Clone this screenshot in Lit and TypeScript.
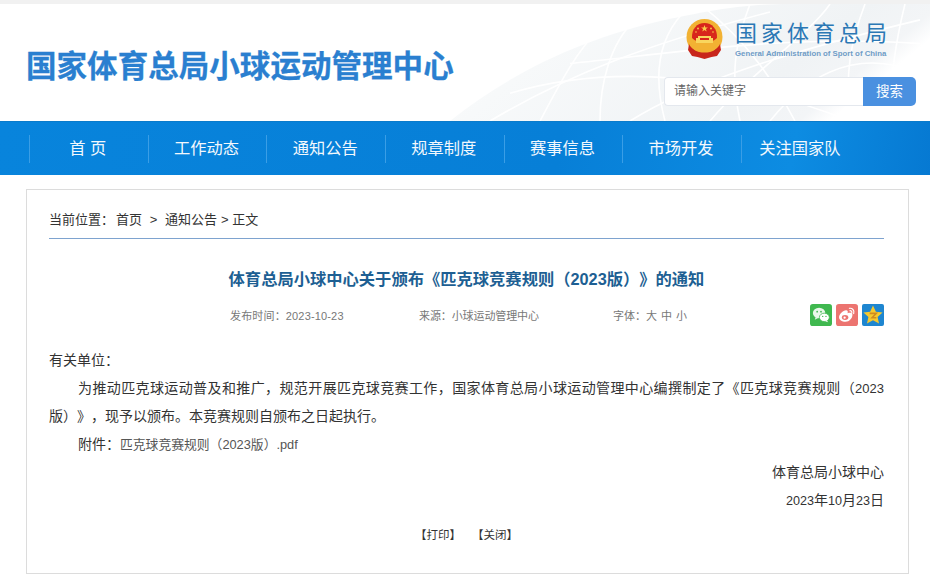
import { LitElement, html, css, svg } from "lit";
import { customElement } from "lit/decorators.js";

const NAV = ["首 页", "工作动态", "通知公告", "规章制度", "赛事信息", "市场开发", "关注国家队"];

const nest = svg`
  <defs>
    <linearGradient id="shade" x1="0" y1="0" x2="1" y2="0.3">
      <stop offset="0" stop-color="#fff"/>
      <stop offset=".3" stop-color="#f7f9fa"/>
      <stop offset=".8" stop-color="#f0f3f5"/>
      <stop offset=".94" stop-color="#f3f5f7"/>
      <stop offset="1" stop-color="#fff"/>
    </linearGradient>
  </defs>
  <path d="M0 118 C60 70 130 35 220 15 C270 4 300 0 340 0 L480 0 L480 118 Z" fill="url(#shade)"/>
  <g fill="none" stroke="#fff" stroke-width="1.6">
    <path d="M40 118 C120 70 200 40 320 8"/><path d="M90 118 C110 80 125 50 150 24"/>
    <path d="M150 118 C150 80 160 40 185 16"/><path d="M215 118 C205 80 205 40 232 10"/>
    <path d="M60 90 C160 60 280 70 400 118"/><path d="M290 118 C280 70 285 40 300 0"/>
    <path d="M345 118 C325 80 300 40 250 0"/><path d="M400 118 C395 70 400 40 415 0"/>
    <path d="M120 60 C220 50 340 30 470 40"/><path d="M180 118 C240 80 330 50 470 16"/>
    <path d="M320 118 C350 80 400 40 470 70"/><path d="M440 118 C440 80 445 40 455 0"/>
    <path d="M260 118 C300 70 360 30 380 0"/>
  </g>`;

@customElement("app-root")
export class AppRoot extends LitElement {
  static styles = css`
    :host { display: block; width: 930px; height: 575px; overflow: hidden; background: #fff;
      font-family: "Liberation Sans", "Noto Sans CJK SC", sans-serif; color: #333; text-spacing-trim: space-all; }
    .top { height: 4px; background: #f1f1f1; }
    .head { position: relative; height: 117px; display: flex; justify-content: space-between; background: #fff; overflow: hidden; }
    .nest { position: absolute; right: 0; top: 0; width: 480px; height: 117px; }
    .site { position: relative; margin: 42px 0 0 26px; font-size: 30.5px; line-height: 40px; font-weight: 700; color: #2a7fd0; letter-spacing: .05px; white-space: nowrap; -webkit-text-stroke: .3px #2a7fd0; }
    .side { position: relative; width: 252px; margin-right: 14px; display: flex; flex-direction: column; align-items: flex-end; }
    .brand { display: flex; align-items: flex-start; gap: 12px; height: 42px; margin: 15px 25px 0 0; }
    .emblem { width: 37px; height: 40px; }
    .names { display: flex; flex-direction: column; }
    .cn { font-size: 22px; line-height: 30px; letter-spacing: 4px; color: #2b78b5; white-space: nowrap; }
    .en { font-size: 7.8px; line-height: 10px; font-weight: 700; color: #6f9cc6; white-space: nowrap; }
    .search { display: flex; width: 252px; height: 29px; margin-top: 16px; }
    .field { flex: 1; box-sizing: border-box; border: 1px solid #e4e8ee; border-right: 0; border-radius: 4px 0 0 4px; background: #fff; padding-left: 9px; font-size: 12px; line-height: 27px; color: #666; }
    .btn { width: 53px; background: #4a90e0; border-radius: 0 5px 5px 0; color: #fff; font-size: 13.5px; line-height: 29px; text-align: center; }
    nav { height: 54px; box-sizing: border-box; padding: 13px 0 0 29px; display: flex; align-items: flex-start; border-top: 1px solid #0a7bcb;
      background: linear-gradient(100deg, #0884dc 0%, #077fd7 60%, #0d8ce2 85%, #0679d2 100%); }
    .item { box-sizing: border-box; width: 118.67px; height: 28px; padding-right: 2px; border-left: 1px solid #3a9ee6; color: #f2f8fd; font-size: 16.25px; line-height: 26px; text-align: center; white-space: nowrap; }
    main { box-sizing: border-box; margin: 14px 21px 0 26px; height: 385px; border: 1px solid #dcdcdc; padding: 0 24px 0 22px; }
    .crumb { height: 49px; box-sizing: border-box; padding-top: 21px; border-bottom: 1px solid #7ea3cf; font-size: 13px; line-height: 18px; color: #333; white-space: pre; word-spacing: .25px; }
    .crumb span { margin-left: 2px; }
    h1 { margin: 28px 0 0; font-size: 16.3px; line-height: 24px; font-weight: 700; color: #1d5f93; text-align: center; white-space: nowrap; }
    .meta { display: flex; align-items: center; height: 24px; margin-top: 12px; font-size: 11px; color: #777; white-space: nowrap; }
    .meta > span { flex: none; }
    .date { margin-left: 181px; width: 189px; letter-spacing: .16px; }
    .src { width: 194px; letter-spacing: -.1px; }
    .meta .size { flex: 1; word-spacing: 1px; }
    .share { display: flex; gap: 4px; }
    .share svg { width: 22px; height: 22px; display: block; }
    .body { margin-top: 19px; font-size: 14px; line-height: 28px; color: #333; }
    .body p { margin: 0; height: 28px; }
    .ind { text-indent: 29px; }
    .just { text-align: justify; text-align-last: justify; }
    .num { font-size: 13px; }
    .date-num { font-size: 12.6px; }
    .file { font-size: 12.8px; color: #555; }
    .r { text-align: right; }
    .actions { display: flex; gap: 11px; margin: 12px 0 0 366px; font-size: 11.5px; line-height: 18px; color: #333; white-space: pre; }
  `;

  render() {
    return html`
      <div class="top"></div>
      <header class="head">
        <svg class="nest" viewBox="0 0 480 118" preserveAspectRatio="none" aria-hidden="true">${nest}</svg>
        <div class="site">国家体育总局小球运动管理中心</div>
        <div class="side">
          <div class="brand">
            <svg class="emblem" viewBox="0 0 37 40" aria-hidden="true">
              <ellipse cx="18.500" cy="18" rx="18" ry="18" fill="#f2b233"/>
              <path d="M6 19c-.5-9 5-15 12.500-15S31.500 10 31 19c-2 2-4 3-5 3H11c-1 0-3-1-5-3z" fill="#d8261c"/>
              <path d="M18.500 6l.9 2.400h2.500l-2 1.500.8 2.500-2.200-1.500-2.200 1.500.8-2.500-2-1.500h2.500z" fill="#f8cf4a"/>
              <circle cx="12" cy="9.500" r=".9" fill="#f8cf4a"/><circle cx="25" cy="9.500" r=".9" fill="#f8cf4a"/>
              <circle cx="10" cy="13" r=".8" fill="#f8cf4a"/><circle cx="27" cy="13" r=".8" fill="#f8cf4a"/>
              <path d="M12 17h13v2h2v5H10v-5h2z" fill="#f9d65e"/>
              <path d="M14 19h9v2h-9z" fill="#d8261c"/>
              <path d="M3 25c2 5 8 8 15.500 8S32 30 34 25l1 6-4 6-5.500 1-7 2-7-2-5.500-1-4-6z" fill="#c8261c"/>
              <path d="M7 26c3 3 7 4.500 11.500 4.500S27 29 30 26l-1.500 5c-3 2-6 2.500-10 2.500s-7-.5-10-2.500z" fill="#f2b233"/>
            </svg>
            <div class="names">
              <div class="cn">国家体育总局</div>
              <div class="en">General Administration of Sport of China</div>
            </div>
          </div>
          <div class="search">
            <div class="field">请输入关键字</div>
            <div class="btn">搜索</div>
          </div>
        </div>
      </header>
      <nav>${NAV.map((n) => html`<div class="item">${n}</div>`)}</nav>
      <main>
        <div class="crumb">当前位置：<span>首页  >  通知公告 > 正文</span></div>
        <h1>体育总局小球中心关于颁布《匹克球竞赛规则（2023版）》的通知</h1>
        <div class="meta">
          <span class="date">发布时间：2023-10-23</span>
          <span class="src">来源：小球运动管理中心</span>
          <span class="size">字体：大 中 小</span>
          <span class="share">
            <svg viewBox="0 0 23 23" aria-hidden="true"><rect width="23" height="23" rx="3" fill="#3fb84f"/>
              <ellipse cx="9.500" cy="9.500" rx="6.500" ry="5.500" fill="#e9f7ea"/><path d="M6 13.500l-1 3 3.500-1.800z" fill="#e9f7ea"/>
              <ellipse cx="15" cy="14" rx="5.200" ry="4.400" fill="#fff" stroke="#3fb84f" stroke-width=".8"/><path d="M17.500 17l1.500 2-3-1z" fill="#fff"/>
              <circle cx="7.500" cy="8" r=".9" fill="#3fb84f"/><circle cx="11.500" cy="8" r=".9" fill="#3fb84f"/>
              <circle cx="13.300" cy="13" r=".7" fill="#3fb84f"/><circle cx="16.700" cy="13" r=".7" fill="#3fb84f"/></svg>
            <svg viewBox="0 0 23 23" aria-hidden="true"><rect width="23" height="23" rx="3" fill="#ec7470"/>
              <path d="M10 18.500c-4 0-6.800-2-6.800-4.700 0-3 4-7.300 7.300-7.300 2 0 2.200 1.500 1.500 3.200 3-1 5.200-.5 5.200 1.500 0 3.800-3.300 7.300-7.200 7.300z" fill="#fff"/>
              <ellipse cx="9.500" cy="14" rx="3.400" ry="2.600" fill="#ec7470"/>
              <circle cx="9" cy="14.300" r="1.200" fill="#fff"/>
              <path d="M14 4.500c3-.5 5.500 2 4.500 5.500M14.500 7c1.500-.2 2.500 1 2 2.500" fill="none" stroke="#fff" stroke-width="1.200" stroke-linecap="round"/></svg>
            <svg viewBox="0 0 23 23" aria-hidden="true"><rect width="23" height="23" rx="2" fill="#1e86d0"/>
              <path d="M11.500 1.500l3 6.500 7 .8-5.200 4.700 1.500 7-6.300-3.600-6.300 3.600 1.500-7-5.200-4.700 7-.8z" fill="#f6c92e"/>
              <path d="M8 9.800h7l-4.500 4.500H15" fill="none" stroke="#cf8b20" stroke-width="1.600"/></svg>
          </span>
        </div>
        <div class="body">
          <p>有关单位：</p>
          <p class="ind just">为推动匹克球运动普及和推广，规范开展匹克球竞赛工作，国家体育总局小球运动管理中心编撰制定了《匹克球竞赛规则（<span class="num">2023</span></p>
          <p>版）》，现予以颁布。本竞赛规则自颁布之日起执行。</p>
          <p class="ind">附件：<span class="file">匹克球竞赛规则（2023版）.pdf</span></p>
          <p class="r">体育总局小球中心</p>
          <p class="r"><span class="date-num">2023</span>年<span class="date-num">10</span>月<span class="date-num">23</span>日</p>
        </div>
        <div class="actions"><span>【打印】</span><span>【关闭】</span></div>
      </main>
    `;
  }
}
